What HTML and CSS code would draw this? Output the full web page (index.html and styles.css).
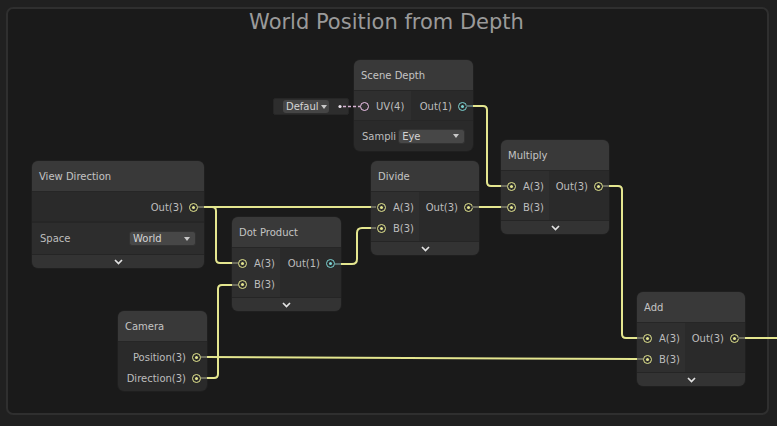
FILE: index.html
```html
<!DOCTYPE html>
<html>
<head>
<meta charset="utf-8">
<link rel="stylesheet" href="styles.css">
</head>
<body>
<div class="graph">
  <div class="group">
    <div class="group-title">World Position from Depth</div>
  </div>

  <!-- Default UV field -->
  <div class="default-field" style="left:273px;top:98px;">
    <div class="dropdown mini">Defaul<span class="caret"></span></div>
  </div>

  <!-- Scene Depth -->
  <div class="node" style="left:354px;top:60px;width:119px;">
    <div class="node-title">Scene Depth</div>
    <div class="ports single">
      <div class="inputs wide">
        <div class="row"><span class="port hollow pink"></span><span class="label">UV(4)</span></div>
      </div>
      <div class="outputs">
        <div class="row out"><span class="label">Out(1)</span><span class="port cyan"></span></div>
      </div>
    </div>
    <div class="setting">
      <span class="setting-label">Sampli</span>
      <div class="dropdown eye">Eye<span class="caret"></span></div>
    </div>
  </div>

  <!-- View Direction -->
  <div class="node" style="left:32px;top:161px;width:172px;">
    <div class="node-title">View Direction</div>
    <div class="outputs-only tall">
      <div class="row out"><span class="label">Out(3)</span><span class="port yellow"></span></div>
    </div>
    <div class="setting space">
      <span class="setting-label">Space</span>
      <div class="dropdown world">World<span class="caret"></span></div>
    </div>
    <div class="expander"><svg width="9" height="6" viewBox="0 0 9 6"><polyline points="1,1 4.5,4.5 8,1"/></svg></div>
  </div>

  <!-- Dot Product -->
  <div class="node" style="left:232px;top:217px;width:109px;">
    <div class="node-title">Dot Product</div>
    <div class="ports">
      <div class="inputs">
        <div class="row"><span class="port yellow"></span><span class="label">A(3)</span></div>
        <div class="row"><span class="port yellow"></span><span class="label">B(3)</span></div>
      </div>
      <div class="outputs">
        <div class="row out"><span class="label">Out(1)</span><span class="port cyan"></span></div>
      </div>
    </div>
    <div class="expander"><svg width="9" height="6" viewBox="0 0 9 6"><polyline points="1,1 4.5,4.5 8,1"/></svg></div>
  </div>

  <!-- Divide -->
  <div class="node" style="left:371px;top:161px;width:108px;">
    <div class="node-title">Divide</div>
    <div class="ports">
      <div class="inputs">
        <div class="row"><span class="port yellow"></span><span class="label">A(3)</span></div>
        <div class="row"><span class="port yellow"></span><span class="label">B(3)</span></div>
      </div>
      <div class="outputs">
        <div class="row out"><span class="label">Out(3)</span><span class="port yellow"></span></div>
      </div>
    </div>
    <div class="expander"><svg width="9" height="6" viewBox="0 0 9 6"><polyline points="1,1 4.5,4.5 8,1"/></svg></div>
  </div>

  <!-- Multiply -->
  <div class="node" style="left:501px;top:140px;width:108px;">
    <div class="node-title">Multiply</div>
    <div class="ports">
      <div class="inputs">
        <div class="row"><span class="port yellow"></span><span class="label">A(3)</span></div>
        <div class="row"><span class="port yellow"></span><span class="label">B(3)</span></div>
      </div>
      <div class="outputs">
        <div class="row out"><span class="label">Out(3)</span><span class="port yellow"></span></div>
      </div>
    </div>
    <div class="expander"><svg width="9" height="6" viewBox="0 0 9 6"><polyline points="1,1 4.5,4.5 8,1"/></svg></div>
  </div>

  <!-- Camera -->
  <div class="node" style="left:118px;top:311px;width:89px;">
    <div class="node-title">Camera</div>
    <div class="outputs-only list">
      <div class="row out"><span class="label">Position(3)</span><span class="port yellow"></span></div>
      <div class="row out"><span class="label">Direction(3)</span><span class="port yellow"></span></div>
    </div>
  </div>

  <!-- Add -->
  <div class="node" style="left:637px;top:292px;width:108px;">
    <div class="node-title">Add</div>
    <div class="ports">
      <div class="inputs">
        <div class="row"><span class="port yellow"></span><span class="label">A(3)</span></div>
        <div class="row"><span class="port yellow"></span><span class="label">B(3)</span></div>
      </div>
      <div class="outputs">
        <div class="row out"><span class="label">Out(3)</span><span class="port yellow"></span></div>
      </div>
    </div>
    <div class="expander"><svg width="9" height="6" viewBox="0 0 9 6"><polyline points="1,1 4.5,4.5 8,1"/></svg></div>
  </div>

  <svg class="wires" width="777" height="426" viewBox="0 0 777 426">
    <defs>
      <linearGradient id="g-dot" gradientUnits="userSpaceOnUse" x1="343" y1="0" x2="371" y2="0">
        <stop offset="0" stop-color="#7cd4d4"/>
        <stop offset="1" stop-color="#e4e68f"/>
      </linearGradient>
      <linearGradient id="g-depth" gradientUnits="userSpaceOnUse" x1="0" y1="110" x2="0" y2="186">
        <stop offset="0" stop-color="#7cd4d4"/>
        <stop offset="1" stop-color="#e4e68f"/>
      </linearGradient>
    </defs>
    <g class="stub">
      <path d="M198 207H204"/>
      <path d="M371 207H376"/>
      <path d="M232 263H238"/>
      <path d="M201 378H207"/>
      <path d="M232 285H238"/>
      <path d="M201 357H207"/>
      <path d="M637 359H643"/>
      <path d="M472 207H479"/>
      <path d="M501 207H507"/>
      <path d="M371 228H376"/>
      <path d="M501 186H507"/>
      <path d="M603 186H609"/>
      <path d="M637 338H643"/>
      <path d="M738 338H745"/>
    </g>
    <g class="stub cyanstub">
      <path d="M335 264H341"/>
      <path d="M466 106H473"/>
    </g>
    <g class="wire">
      <path d="M204 207H371"/>
      <path d="M204 207H212Q216 207 216 211V259Q216 263 220 263H232"/>
      <path d="M207 378H214Q218 378 218 374V289Q218 285 222 285H232"/>
      <path d="M207 357L637 359"/>
      <path d="M479 207H501"/>
      <path d="M609 186H618Q622 186 622 190V334Q622 338 626 338H637"/>
      <path d="M745 338H777"/>
      <path d="M341 264H352Q357 264 357 259V233Q357 228 362 228H371" stroke="url(#g-dot)"/>
      <path d="M473 106H483Q487 106 487 110V182Q487 186 491 186H501" stroke="url(#g-depth)"/>
    </g>
    <path class="uvlink" d="M343 106.5H360"/>
    <circle cx="340" cy="106.5" r="1.6" fill="#e8e0ea"/>
  </svg>
</div>
</body>
</html>
```

FILE: styles.css
```css
html, body {
  margin: 0;
  padding: 0;
  background: #202020;
}

.graph {
  position: relative;
  width: 777px;
  height: 426px;
  overflow: hidden;
  background: #202020;
  font-family: "DejaVu Sans", sans-serif;
}

.group {
  position: absolute;
  left: 6px;
  top: 7px;
  width: 763px;
  height: 408px;
  box-sizing: border-box;
  border: 2px solid #2f2f2f;
  border-radius: 7px;
  background: #1a1a1a;
}

.group-title {
  text-align: center;
  padding-top: 1px;
  font-size: 21px;
  line-height: 25px;
  color: #9a9a9a;
  margin-left: -2px;
}

.node {
  position: absolute;
  border-radius: 6px;
  overflow: hidden;
  background: #2a2a2a;
  box-shadow: 0 0 0 1px #1f1f1f;
}

.node-title {
  height: 31px;
  background: #393939;
  display: flex;
  align-items: center;
  padding-left: 7px;
  padding-top: 1px;
  font-size: 10px;
  color: #c4c4c4;
  border-bottom: 1px solid #262626;
  box-sizing: border-box;
}

.ports {
  display: flex;
}

.inputs {
  background: #2f2f2f;
  padding: 5px 5px 2px 6px;
  flex: none;
}

.inputs.wide {
  width: 57px;
  box-sizing: border-box;
}

.outputs {
  flex: 1;
  padding: 5px 0 2px 0;
  background: #2a2a2a;
}

.ports.single .inputs,
.ports.single .outputs {
  padding-top: 5px;
  padding-bottom: 3px;
}

.row {
  height: 21px;
  display: flex;
  align-items: center;
  gap: 7px;
  font-size: 10px;
  color: #bdbdbd;
  white-space: nowrap;
}

.row.out {
  justify-content: flex-end;
  padding-right: 6px;
  gap: 6px;
}

.outputs-only.tall {
  height: 30px;
  padding-top: 1px;
  display: flex;
  align-items: center;
  justify-content: flex-end;
  border-bottom: 1px solid #262626;
  box-sizing: border-box;
}

.outputs-only.tall .row {
  width: 100%;
}

.outputs-only.list {
  padding: 5px 0 2px;
}

.port {
  width: 9px;
  height: 9px;
  box-sizing: border-box;
  border-radius: 50%;
  border: 1.5px solid currentColor;
  display: flex;
  align-items: center;
  justify-content: center;
  flex: none;
}

.port::after {
  content: "";
  width: 3px;
  height: 3px;
  border-radius: 50%;
  background: currentColor;
}

.port.hollow::after {
  display: none;
}

.yellow { color: #e4e68f; }
.cyan { color: #7cd4d4; }
.pink { color: #f0c4ec; }

.label {
  color: #bdbdbd;
}

.setting {
  display: flex;
  align-items: center;
  gap: 2px;
  padding: 0 8px;
  font-size: 10px;
  color: #bdbdbd;
  border-top: 1px solid #262626;
  height: 31px;
  box-sizing: border-box;
}

.setting.space {
  height: 32px;
  background: #2d2d2d;
  justify-content: space-between;
}

.setting-label {
  white-space: nowrap;
  flex: none;
}

.dropdown {
  height: 15px;
  box-sizing: border-box;
  background: #474747;
  border: 1px solid #323232;
  border-radius: 3px;
  display: flex;
  align-items: center;
  justify-content: space-between;
  padding: 0 5px 0 3px;
  font-size: 10px;
  color: #d4d4d4;
}

.dropdown.eye {
  width: 68px;
}

.dropdown.world {
  width: 67px;
}

.caret {
  width: 0;
  height: 0;
  border-left: 3.5px solid transparent;
  border-right: 3.5px solid transparent;
  border-top: 4px solid #c8c8c8;
}

.default-field {
  position: absolute;
  width: 76px;
  height: 17px;
  box-sizing: border-box;
  background: #2d2d2d;
  border: 1px solid #262626;
  border-radius: 2px;
  display: flex;
  align-items: center;
  padding-left: 9px;
}

.dropdown.mini {
  width: 46px;
  height: 13px;
  gap: 2px;
  padding: 0 3px;
  border: none;
  background: #454545;
}

.dropdown.mini .caret {
  border-left-width: 3px;
  border-right-width: 3px;
  border-top-width: 4px;
}

.expander {
  height: 14px;
  background: #333333;
  border-top: 1px solid #252525;
  display: flex;
  justify-content: center;
  align-items: center;
  box-sizing: border-box;
}

.expander svg polyline {
  fill: none;
  stroke: #e2e2e2;
  stroke-width: 1.7;
}

.wires {
  position: absolute;
  left: 0;
  top: 0;
  pointer-events: none;
}

.wire path {
  fill: none;
  stroke: #e4e68f;
  stroke-width: 2;
}

.stub path {
  fill: none;
  stroke: #6c6c5e;
  stroke-width: 2;
}

.cyanstub path {
  stroke: #587070;
}

.uvlink {
  fill: none;
  stroke: #d8b4d4;
  stroke-width: 1.5;
  stroke-dasharray: 3 2;
}
```
